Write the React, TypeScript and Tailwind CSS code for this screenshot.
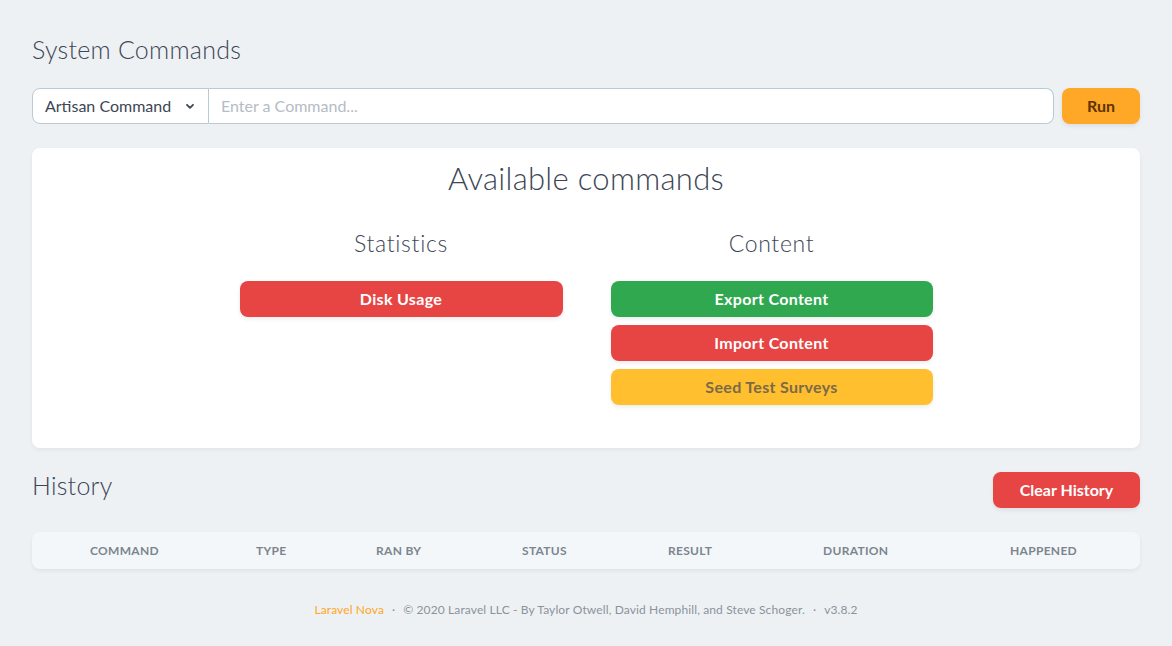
import React from "react";

const font = { fontFamily: "Lato, 'Noto Sans', sans-serif" };

function Btn({ label, cls }: { label: string; cls: string }) {
  return (
    <button
      className={`h-9 w-full rounded-lg text-[16px] font-bold tracking-[0.02em] shadow-[0_2px_4px_rgba(0,0,0,0.08)] ${cls}`}
    >
      {label}
    </button>
  );
}

export default function App() {
  const cols = ["COMMAND", "TYPE", "RAN BY", "STATUS", "RESULT", "DURATION", "HAPPENED"];
  return (
    <div className="min-h-[646px] w-full bg-[#eef1f4] px-8 pt-[33px] text-[#3c4655]" style={font}>
      <h1 className="text-[25px] font-light leading-8 tracking-[0.01em] text-[#3c4655]">System Commands</h1>

      <div className="mt-[23px] flex items-center">
        <div className="flex h-9 w-[177px] items-center justify-between rounded-l-lg border border-[#bacad6] bg-white pl-3 pr-3 text-[16px] text-[#3c4655]">
          <span>Artisan Command</span>
          <svg width="12" height="12" viewBox="0 0 20 20" fill="none" stroke="#3c4655" strokeWidth="3" strokeLinecap="round" strokeLinejoin="round">
            <path d="M5 8l5 5 5-5" />
          </svg>
        </div>
        <div className="flex h-9 flex-1 items-center rounded-r-lg border border-l-0 border-[#bacad6] bg-white px-3 text-[16px] text-[#b4bcc4]">
          Enter a Command...
        </div>
        <button className="ml-2 h-9 w-[78px] rounded-lg bg-[#ffa726] text-[16px] font-bold text-[#5c3500] shadow-[0_2px_4px_rgba(0,0,0,0.08)]">
          Run
        </button>
      </div>

      <div className="mt-6 h-[300px] rounded-lg bg-white pt-[10px] shadow-[0_2px_4px_rgba(0,0,0,0.05)]">
        <h2 className="text-center text-[31px] font-light leading-10 tracking-[0.01em] text-[#3c4655]">Available commands</h2>
        <div className="mt-[31px] flex justify-center gap-12">
          <div className="w-[323px]">
            <h3 className="text-center text-[23px] font-light leading-7 tracking-[0.03em]">Statistics</h3>
            <div className="mt-[24px] flex flex-col gap-2">
              <Btn label="Disk Usage" cls="bg-[#e74444] text-white" />
            </div>
          </div>
          <div className="w-[322px]">
            <h3 className="text-center text-[23px] font-light leading-7 tracking-[0.03em]">Content</h3>
            <div className="mt-[24px] flex flex-col gap-2">
              <Btn label="Export Content" cls="bg-[#2fa84f] text-white" />
              <Btn label="Import Content" cls="bg-[#e74444] text-white" />
              <Btn label="Seed Test Surveys" cls="bg-[#ffbf2f] text-[#7a6a48]" />
            </div>
          </div>
        </div>
      </div>

      <div className="mt-6 flex items-start justify-between">
        <h2 className="text-[25px] font-light leading-[26px] tracking-[0.01em]">History</h2>
        <button className="h-9 w-[147px] rounded-lg bg-[#e74444] text-[16px] font-bold text-white shadow-[0_2px_4px_rgba(0,0,0,0.08)]">
          Clear History
        </button>
      </div>

      <div className="mt-6 grid h-[37px] grid-cols-[166px_120px_146px_146px_155px_187px_1fr] items-center rounded-lg bg-[#f4f7fa] pl-[58px] text-[12px] font-bold tracking-wide text-[#7c858e] shadow-[0_2px_4px_rgba(0,0,0,0.06)]">
        {cols.map((c) => (
          <div key={c}>{c}</div>
        ))}
      </div>

      <div className="mt-[32px] flex justify-center text-[12px] tracking-[0.01em] text-[#8a939b]">
        <span className="text-[#ffa726]">Laravel Nova</span>
        <span className="mx-2">·</span>
        <span>© 2020 Laravel LLC - By Taylor Otwell, David Hemphill, and Steve Schoger.</span>
        <span className="mx-2">·</span>
        <span>v3.8.2</span>
      </div>
    </div>
  );
}
